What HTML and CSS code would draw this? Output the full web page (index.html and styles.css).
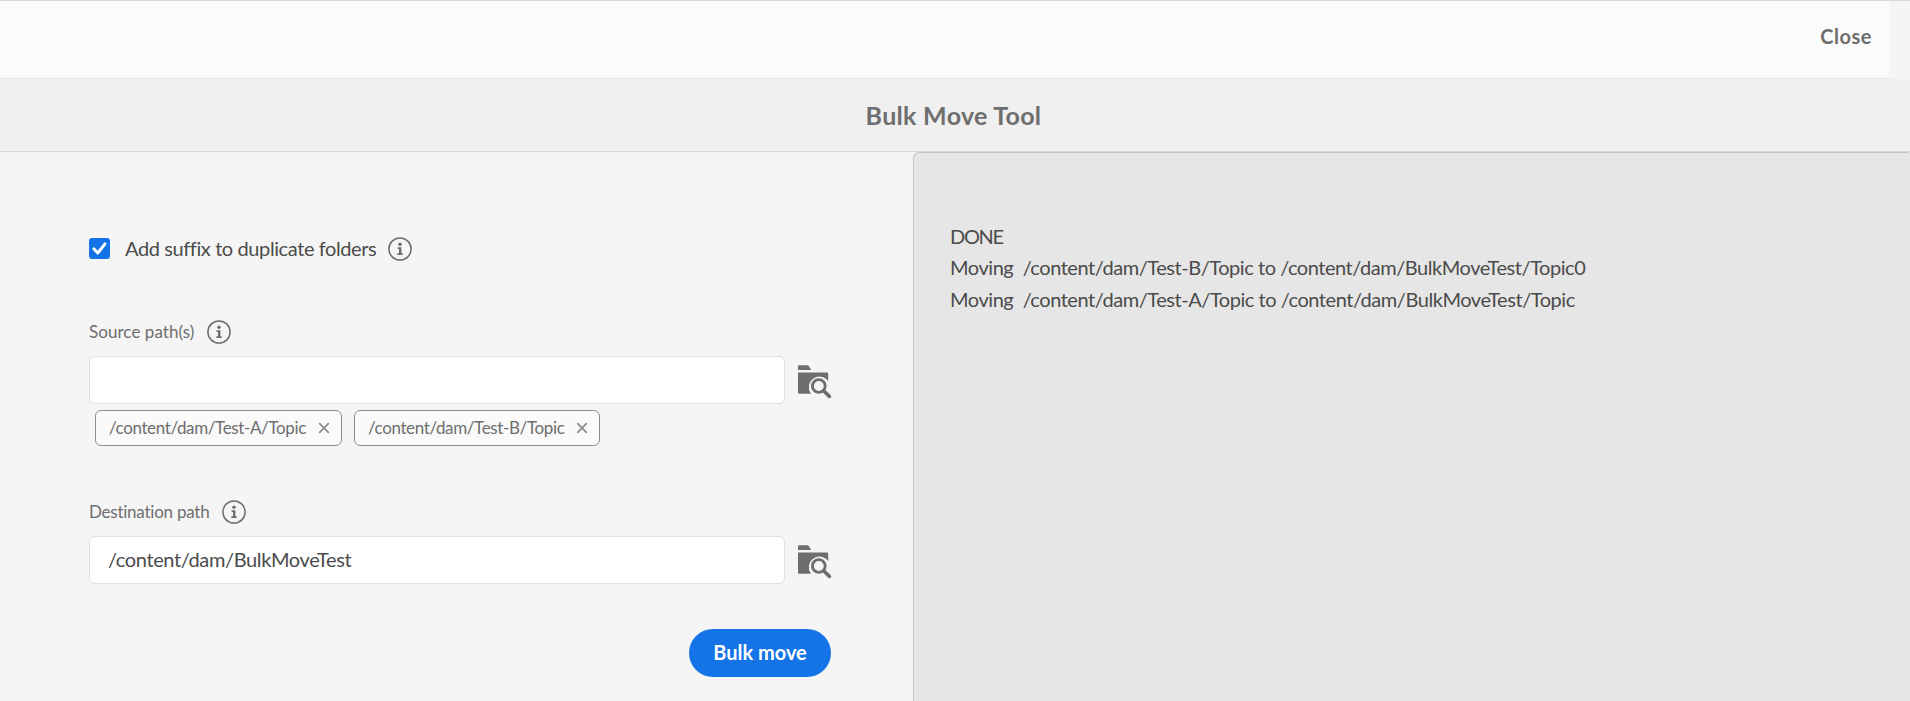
FILE: index.html
```html
<!DOCTYPE html>
<html lang="en">
<head>
<meta charset="utf-8">
<title>Bulk Move Tool</title>
<link rel="stylesheet" href="styles.css">
</head>
<body>
<svg class="defs" aria-hidden="true">
  <symbol id="info" viewBox="0 0 24 24">
    <circle cx="12" cy="12" r="11.1" fill="none" stroke="currentColor" stroke-width="1.5"/>
    <circle cx="12" cy="7.2" r="1.700" fill="currentColor"/>
    <path d="M9.600 10.300h3.800v6h1.300v1.600H9.400v-1.600H11v-4.400H9.600z" fill="currentColor"/>
  </symbol>
  <symbol id="browse" viewBox="0 0 34 34">
    <path d="M0 5V1.400Q0 .2 1.200.2H9.200Q10 .2 10.600.8L13.300 5z" fill="currentColor"/>
    <path d="M0 7.500H29Q30.200 7.500 30.200 8.700V16A10.500 10.500 0 0 0 12.900 28.700H1.200Q0 28.700 0 27.500z" fill="currentColor"/>
    <circle cx="20.800" cy="21" r="6.400" fill="none" stroke="currentColor" stroke-width="2.900"/>
    <path d="M25.600 25.800L31.400 31.400" stroke="currentColor" stroke-width="3.600" stroke-linecap="round"/>
  </symbol>
  <symbol id="cross" viewBox="0 0 12 12">
    <path d="M1.200 1.200L10.800 10.800M10.800 1.200L1.200 10.800" stroke="currentColor" stroke-width="1.800"/>
  </symbol>
</svg>
<header class="header"><div class="actions"><span class="close">Close</span></div></header>
<div class="titlebar"><h1 class="title">Bulk Move Tool</h1></div>
<main class="main">
  <form class="form">
    <div class="check-row">
      <span class="checkbox"><svg viewBox="0 0 21 21"><path d="M4.800 10.800L8.800 15L16 5.800" fill="none" stroke="#fff" stroke-width="2.900" stroke-linecap="round" stroke-linejoin="round"/></svg></span>
      <span class="check-label">Add suffix to duplicate folders</span>
      <svg class="info"><use href="#info"/></svg>
    </div>
    <div class="label-row source"><span class="label label-source">Source path(s)</span><svg class="info"><use href="#info"/></svg></div>
    <div class="field-row"><div class="input"></div><svg class="browse"><use href="#browse"/></svg></div>
    <div class="tags">
      <div class="tag"><span class="tag-text">/content/dam/Test-A/Topic</span><svg class="cross"><use href="#cross"/></svg></div>
      <div class="tag"><span class="tag-text">/content/dam/Test-B/Topic</span><svg class="cross"><use href="#cross"/></svg></div>
    </div>
    <div class="label-row destination"><span class="label label-destination">Destination path</span><svg class="info"><use href="#info"/></svg></div>
    <div class="field-row"><div class="input"><span class="value">/content/dam/BulkMoveTest</span></div><svg class="browse"><use href="#browse"/></svg></div>
    <div class="submit-row"><div class="button"><span class="button-text">Bulk move</span></div></div>
  </form>
  <section class="log">
    <div class="line status">DONE</div>
    <div class="line">Moving&nbsp; /content/dam/Test-B/Topic to /content/dam/BulkMoveTest/Topic0</div>
    <div class="line">Moving&nbsp; /content/dam/Test-A/Topic to /content/dam/BulkMoveTest/Topic</div>
  </section>
</main>
</body>
</html>
```

FILE: styles.css
```css
* { box-sizing: border-box; }
body { margin: 0; height: 701px; overflow: hidden; display: flex; flex-direction: column; background: #f5f5f5; color: #4b4b4b; font: 20px/24px Lato, sans-serif; }
.defs { position: absolute; width: 0; height: 0; }
svg { display: block; flex: none; }
.header { height: 79px; border-top: 1px solid #dadada; padding-right: 21px; flex: none; }
.actions { height: 78px; background: #fbfbfb; border-bottom: 1px solid #e8e8e8; display: flex; justify-content: flex-end; padding: 23px 17px 0 0; }
.close { color: #6e6e6e; font-weight: 700; letter-spacing: 0.5px; }
.titlebar { height: 73px; flex: none; background: #f0f0f0; border-bottom: 1px solid #dadada; display: flex; justify-content: center; padding: 20px 3px 0 0; }
.title { margin: 0; font-size: 25px; line-height: 32px; font-weight: 700; color: #6e6e6e; letter-spacing: 0.3px; }
.main { flex: 1; display: grid; grid-template-columns: 913px 1fr; }
.form { padding: 84px 81px 0 89px; }
.check-row { height: 25px; display: flex; align-items: center; }
.checkbox { width: 21px; height: 21px; border-radius: 3px; background: #1473e6; margin-right: 15px; }
.check-label { letter-spacing: -0.4px; font-variant-ligatures: none; white-space: nowrap; line-height: 22px; padding-bottom: 2px; }
.info { width: 24px; height: 24px; color: #6e6e6e; margin-left: 12px; }
.label-row { height: 24px; display: flex; align-items: center; }
.label-row .info { margin-left: 13px; }
.label { font-size: 17px; color: #6e6e6e; }
.label-source { letter-spacing: 0.06px; }
.label-destination { letter-spacing: -0.24px; }
.source { margin-top: 59px; }
.destination { margin-top: 54px; }
.field-row { margin-top: 12px; display: flex; align-items: flex-start; }
.input { width: 696px; height: 48px; border: 1px solid #e0e0e0; border-radius: 6px; background: #fff; padding: 10px 18px; margin-right: 13px; flex: none; }
.value { letter-spacing: -0.37px; white-space: nowrap; }
.browse { width: 34px; height: 34px; color: #6e6e6e; margin-top: 9px; }
.tags { display: flex; gap: 12px; padding: 6px 0 0 6px; }
.tag { width: 247px; height: 36px; border: 1px solid #8e8e8e; border-radius: 6px; background: #fafafa; display: flex; align-items: center; justify-content: space-between; padding: 0 11px 0 13px; color: #6e6e6e; font-size: 17px; }
.tag + .tag { width: 246px; }
.tag-text { letter-spacing: -0.37px; white-space: nowrap; }
.cross { width: 12px; height: 12px; color: #8e8e8e; }
.submit-row { display: flex; justify-content: flex-end; margin-top: 45px; padding-right: 1px; }
.button { width: 142px; height: 48px; border-radius: 24px; background: #1473e6; color: #fff; font-weight: 700; display: flex; justify-content: center; padding-top: 11px; }
.log { background: #e6e6e6; border: 1px solid #c4c4c4; border-width: 1px 0 0 1px; border-radius: 6px 2px 0 0; padding: 68px 0 0 36px; line-height: 31px; }
.line { white-space: nowrap; letter-spacing: -0.45px; }
.line:last-child { margin-top: 1px; }
.status { letter-spacing: -1.300px; }
```
